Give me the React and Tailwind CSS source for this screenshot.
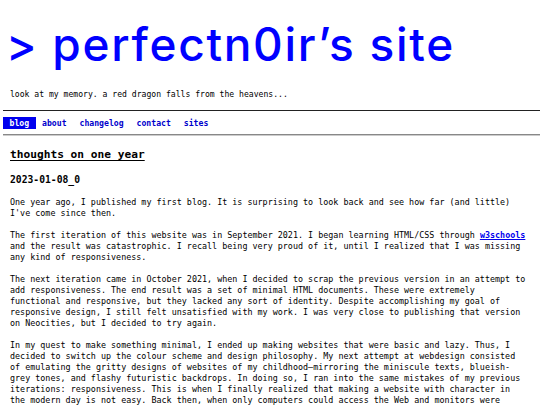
import React from 'react';

const links = ['blog', 'about', 'changelog', 'contact', 'sites'];

const App = () => {
  return (
    <div className="min-h-screen w-[540px] overflow-hidden bg-white text-black font-['DejaVu_Sans_Mono',monospace]">
      <h1 className="pl-[6px] pt-[21px] font-['Inter',sans-serif] text-[46px] leading-[46px] font-medium tracking-[1.7px] text-[#0000ff] whitespace-nowrap">
        &gt; perfectn0ir’s site
      </h1>

      <p className="mt-[22px] pl-[10px] text-[8.1px] leading-[11px]">
        look at my memory. a red dragon falls from the heavens...
      </p>

      <div className="ml-[3px] mt-[10px] h-px bg-[#222]" />

      <nav className="ml-[3px] mt-[6px] flex text-[8.15px] leading-[12px] font-bold">
        {links.map((l) => (
          <span
            key={l}
            className={`px-[6.5px] ${l === 'blog' ? 'bg-[#0000ee] text-white' : 'text-[#0000cc]'}`}
          >
            {l}
          </span>
        ))}
      </nav>

      <div className="ml-[3px] mt-[5px] border-t border-b border-t-[#888] border-b-[#ccc]" />

      <main className="pl-[10px] pt-[12px]">
        <h2 className="text-[11.2px] leading-[14px] font-bold underline underline-offset-[2px]">
          thoughts on one year
        </h2>
        <h3 className="mt-[12px] text-[9.7px] leading-[12px] font-bold">2023-01-08_0</h3>

        <div className="mt-[11px] w-[519px] text-[8.4px] leading-[11px] tracking-[0.01px] flex flex-col gap-[11px]">
          <p>
            One year ago, I published my first blog. It is surprising to look back and see how far (and little)
            I've come since then.
          </p>
          <p>
            The first iteration of this website was in September 2021. I began learning HTML/CSS through{' '}
            <a href="#" className="font-bold text-[#0000ee] underline">w3schools</a> and the result was
            catastrophic. I recall being very proud of it, until I realized that I was missing any kind of
            responsiveness.
          </p>
          <p>
            The next iteration came in October 2021, when I decided to scrap the previous version in an attempt to
            add responsiveness. The end result was a set of minimal HTML documents. These were extremely
            functional and responsive, but they lacked any sort of identity. Despite accomplishing my goal of
            responsive design, I still felt unsatisfied with my work. I was very close to publishing that version
            on Neocities, but I decided to try again.
          </p>
          <p>
            In my quest to make something minimal, I ended up making websites that were basic and lazy. Thus, I
            decided to switch up the colour scheme and design philosophy. My next attempt at webdesign consisted
            of emulating the gritty designs of websites of my childhood—mirroring the miniscule texts, blueish-grey
            tones, and flashy futuristic backdrops. In doing so, I ran into the same mistakes of my previous
            iterations: responsiveness. This is when I finally realized that making a website with character in
            the modern day is not easy. Back then, when only computers could access the Web and monitors were
            mostly the same size, designers could get away with fixed layouts.
          </p>
        </div>
      </main>
    </div>
  );
};

export default App;
